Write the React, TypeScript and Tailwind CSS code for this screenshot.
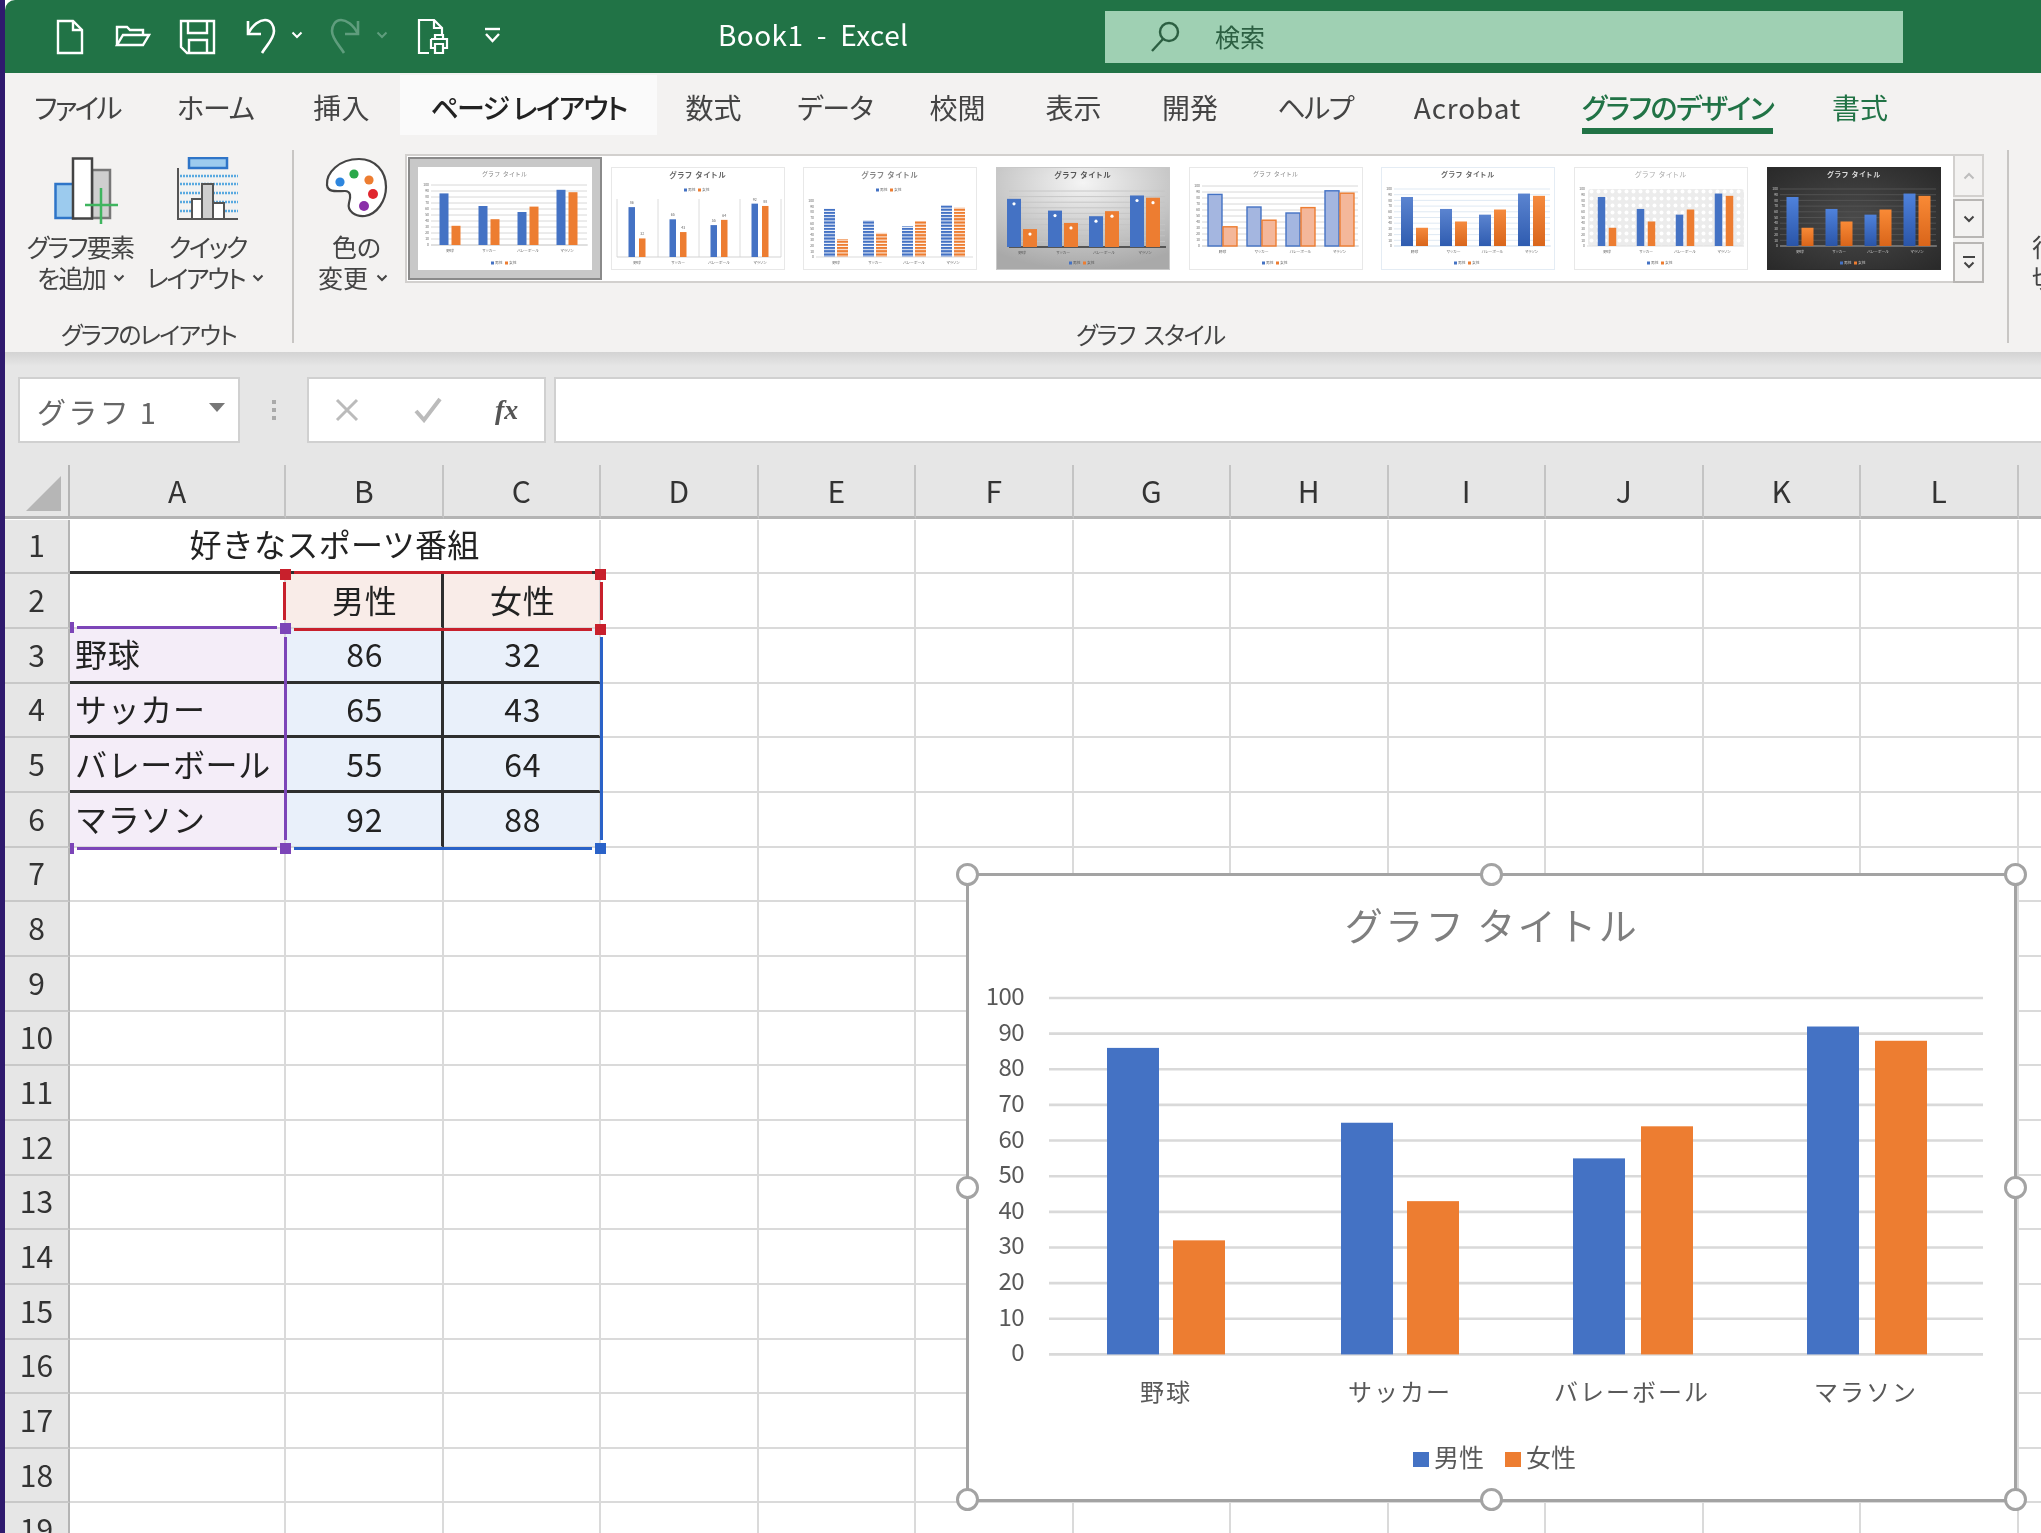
import { Fragment } from "react";

const tabs = [
  { label: "ファイル", w: "w-[142px]", t: "tracking-[-0.1em]" },
  { label: "ホーム", w: "w-[135px]", t: "tracking-[-0.04em]" },
  { label: "挿入", w: "w-[117px]", t: "tracking-[0.01em]" },
  { label: "ページ レイアウト", w: "w-[257px]", t: "tracking-[-0.06em]", active: true },
  { label: "数式", w: "w-[113px]", t: "" },
  { label: "データ", w: "w-[130px]", t: "tracking-[-0.03em]" },
  { label: "校閲", w: "w-[115px]", t: "" },
  { label: "表示", w: "w-[117px]", t: "" },
  { label: "開発", w: "w-[116px]", t: "" },
  { label: "ヘルプ", w: "w-[134px]", t: "tracking-[-0.06em]" },
  { label: "Acrobat", w: "w-[171px]", t: "tracking-[0.03em]" },
  { label: "グラフのデザイン", w: "w-[249px]", t: "tracking-[-0.05em]", green: true, line: true },
  { label: "書式", w: "w-[116px]", t: "", green: true },
];

const men = [86, 65, 55, 92];
const women = [32, 43, 64, 88];
const cats = ["野球", "サッカー", "バレーボール", "マラソン"];

const columns = ["A", "B", "C", "D", "E", "F", "G", "H", "I", "J", "K", "L", "M"];
const rows = Array.from({ length: 19 }, (_, i) => i + 1);

const sheet: Record<string, string> = {
  B2: "男性",
  C2: "女性",
  A3: "野球",
  B3: "86",
  C3: "32",
  A4: "サッカー",
  B4: "65",
  C4: "43",
  A5: "バレーボール",
  B5: "55",
  C5: "64",
  A6: "マラソン",
  B6: "92",
  C6: "88",
};

// selection lines and handles that sit over the cells
const marks = [
  "left-[289px] top-[106px] w-[298px] h-[3px] bg-[#c8202c]",
  "left-[289px] top-[163px] w-[298px] h-[3px] bg-[#c8202c]",
  "left-[278px] top-[117px] w-[3px] h-[38px] bg-[#c8202c]",
  "left-[595px] top-[117px] w-[3px] h-[38px] bg-[#c8202c]",
  "left-[275px] top-[104px] w-[11px] h-[11px] bg-[#c8202c]",
  "left-[590px] top-[104px] w-[11px] h-[11px] bg-[#c8202c]",
  "left-[590px] top-[159px] w-[11px] h-[11px] bg-[#c8202c]",
  "left-[72px] top-[161px] w-[200px] h-[3px] bg-[#7c45b8]",
  "left-[72px] top-[382px] w-[200px] h-[3px] bg-[#7c45b8]",
  "left-[279px] top-[172px] w-[3px] h-[203px] bg-[#7c45b8]",
  "left-[65px] top-[157px] w-[4px] h-[11px] bg-[#7c45b8]",
  "left-[65px] top-[378px] w-[4px] h-[11px] bg-[#7c45b8]",
  "left-[275px] top-[158px] w-[11px] h-[11px] bg-[#7c45b8]",
  "left-[275px] top-[378px] w-[11px] h-[11px] bg-[#7c45b8]",
  "left-[289px] top-[382px] w-[298px] h-[3px] bg-[#2a62c8]",
  "left-[595px] top-[172px] w-[3px] h-[203px] bg-[#2a62c8]",
  "left-[590px] top-[378px] w-[11px] h-[11px] bg-[#2a62c8]",
];

const chartHandles = [
  "left-[-10px] top-[-10px]",
  "left-[514px] top-[-10px]",
  "left-[1038px] top-[-10px]",
  "left-[-10px] top-[303px]",
  "left-[1038px] top-[303px]",
  "left-[-10px] top-[615px]",
  "left-[514px] top-[615px]",
  "left-[1038px] top-[615px]",
];

function cellClass(col: string, row: number) {
  const inner = row >= 3 && row <= 5;
  const bottom = inner ? "border-b-[3px] border-b-[#2e2e2e]" : "border-b-2 border-b-[#dadada]";
  const right = col === "B" && row >= 2 && row <= 6 ? "border-r-[3px] border-r-[#2e2e2e]" : "border-r-2 border-r-[#dadada]";
  let bg = "bg-white";
  if ((col === "B" || col === "C") && row === 2) bg = "bg-[#f9ece8]";
  if ((col === "B" || col === "C") && row >= 3 && row <= 6) bg = "bg-[#e9f0fa]";
  if (col === "A" && row >= 3 && row <= 6) bg = "bg-[#f4edf8]";
  if (col === "A") return `${bottom} border-r-2 border-r-[#dadada] ${bg} justify-start pl-[5px]`;
  if (col === "B" || col === "C") return `${bottom} ${right} ${bg} justify-center pl-[3px]`;
  return `border-b-2 border-b-[#dadada] border-r-2 border-r-[#dadada] ${bg}`;
}

function Chevron({ className = "" }: { className?: string }) {
  return (
    <svg width="12" height="8" viewBox="0 0 12 8" className={`shrink-0 ${className}`}>
      <path d="M1.5 1.5 6 6l4.5-4.5" fill="none" stroke="currentColor" strokeWidth="2" />
    </svg>
  );
}

function QuickAccess() {
  return (
    <div className="flex items-center h-full pl-[51px] text-white">
      <svg width="28" height="36" viewBox="0 0 28 36" fill="none" stroke="currentColor" strokeWidth="2.4">
        <path d="M2 2h15l9 9v23H2z" />
        <path d="M17 2v9h9" />
      </svg>
      <svg width="36" height="24" viewBox="0 0 36 24" fill="none" stroke="currentColor" strokeWidth="2.4" className="ml-[31px] mt-[-2px]">
        <path d="M2 21V3h10l3 3h13v5" />
        <path d="M2 21l6-10h26l-6 10z" />
      </svg>
      <svg width="37" height="36" viewBox="0 0 37 36" fill="none" stroke="currentColor" strokeWidth="2.4" className="ml-[28px]">
        <path d="M2 2h33v32H8l-6-6z" />
        <path d="M9 2v12h19V2" />
        <path d="M10 34V21h18v13" />
      </svg>
      <svg width="31" height="37" viewBox="0 0 31 37" fill="none" stroke="currentColor" strokeWidth="2.6" className="ml-[29px]">
        <path d="M3 3v13h13" />
        <path d="M3 16C8 6 15 2 20 2c6 0 9 6 9 11 0 8-8 15-12 22" />
      </svg>
      <Chevron className="ml-[15px] mt-[-4px]" />
      <svg width="31" height="37" viewBox="0 0 31 37" fill="none" stroke="#5f9d7d" strokeWidth="2.6" className="ml-[27px]">
        <path d="M28 3v13H15" />
        <path d="M28 16C23 6 16 2 11 2 5 2 2 8 2 13c0 8 8 15 12 22" />
      </svg>
      <Chevron className="ml-[15px] mt-[-4px] text-[#5f9d7d]" />
      <svg width="32" height="36" viewBox="0 0 32 36" fill="none" stroke="currentColor" strokeWidth="2.2" className="ml-[29px]">
        <path d="M12 34H2V1h15l8 8v8" />
        <path d="M17 1v8h8" />
        <path d="M14 20h16v9h-4" />
        <path d="M18 20v-4h8v4" />
        <path d="M18 25h8v9h-8z" />
        <path d="M18 29h-4v-9" />
      </svg>
      <svg width="17" height="16" viewBox="0 0 17 16" fill="none" stroke="currentColor" strokeWidth="2.4" className="ml-[35px] mt-[-4px]">
        <path d="M1 2h15" />
        <path d="M2 7l6.5 7L15 7" />
      </svg>
    </div>
  );
}

function ChartElementIcon() {
  return (
    <svg width="66" height="68" viewBox="0 0 66 68">
      <rect x="1.5" y="27" width="20" height="34" fill="#9ccbee" stroke="#2e75c8" strokeWidth="2.5" />
      <rect x="38" y="13" width="18" height="48" fill="#cfcfcf" stroke="#777" strokeWidth="2.5" />
      <rect x="19" y="1.5" width="19" height="60" fill="#fff" stroke="#444" strokeWidth="2.5" />
      <path d="M31 48h33M47 31v36" stroke="#3fb55f" strokeWidth="2.5" fill="none" />
    </svg>
  );
}

function QuickLayoutIcon() {
  return (
    <svg width="62" height="66" viewBox="0 0 62 66">
      <rect x="12" y="1" width="38" height="10" fill="#9ccbee" stroke="#2e75c8" strokeWidth="2.5" />
      {[19, 27, 36, 45, 54].map((y) => (
        <path key={y} d={`M3 ${y}h58`} stroke="#58a9e0" strokeWidth="2.4" strokeDasharray="2 1" />
      ))}
      <path d="M1 11v51h60" fill="none" stroke="#555" strokeWidth="2" />
      <rect x="15" y="42" width="10" height="20" fill="#fff" stroke="#555" strokeWidth="2" />
      <rect x="25" y="27" width="11" height="35" fill="#cfcfcf" stroke="#555" strokeWidth="2" />
      <rect x="36" y="46" width="11" height="16" fill="#fff" stroke="#555" strokeWidth="2" />
    </svg>
  );
}

function PaletteIcon() {
  return (
    <svg width="63" height="62" viewBox="0 0 63 62">
      <path
        d="M34 2C14 2 1 16 2 28c1 8 10 6 18 6 6 0 6 6 4 12-2 8 6 14 16 13 12-2 21-15 21-29C61 14 50 2 34 2z"
        fill="#fff"
        stroke="#444"
        strokeWidth="2.2"
      />
      <circle cx="15" cy="25" r="4.6" fill="#2e86de" />
      <circle cx="29" cy="17" r="4.6" fill="#2aa84a" />
      <circle cx="44" cy="23" r="4.6" fill="#ed7d31" />
      <circle cx="48" cy="37" r="5" fill="#e0262e" />
      <circle cx="39" cy="49" r="5" fill="#8a2fa8" />
    </svg>
  );
}

type ThumbCfg = {
  bg: string;
  titleFill: string;
  titleSize: number;
  titleWeight: number;
  titleY: number;
  legendY: number;
  cx: number;
  step: number;
  barW: number;
  gap: number;
  top: number;
  base: number;
  grid: string;
  axis: string;
  text: string;
  blue: string;
  orange: string;
  edgeB?: string;
  edgeO?: string;
  yLabels?: boolean;
  vLines?: boolean;
  dots?: boolean;
  values?: boolean;
  hatch?: boolean;
  frame: string;
};

const thumbs: ThumbCfg[] = [
  { bg: "#fff", titleFill: "#888", titleSize: 6, titleWeight: 400, titleY: 9, legendY: 97, cx: 32, step: 39, barW: 9, gap: 3, top: 18, base: 78, grid: "#d4d4d4", axis: "#d4d4d4", text: "#666", blue: "#4472c4", orange: "#ed7d31", yLabels: true, frame: "#fff" },
  { bg: "#fff", titleFill: "#666", titleSize: 7.5, titleWeight: 700, titleY: 11, legendY: 24, cx: 26, step: 41, barW: 6.5, gap: 4, top: 32, base: 90, grid: "none", axis: "#d4d4d4", text: "#666", blue: "#4472c4", orange: "#ed7d31", vLines: true, values: true, frame: "#e8e8e8" },
  { bg: "#fff", titleFill: "#888", titleSize: 7.5, titleWeight: 700, titleY: 11, legendY: 24, cx: 33, step: 39, barW: 11, gap: 2, top: 34, base: 90, grid: "none", axis: "#dcdcdc", text: "#666", blue: "url(#stripe-b)", orange: "url(#stripe-o)", yLabels: true, frame: "#e8e8e8" },
  { bg: "url(#metal)", titleFill: "#555", titleSize: 7.5, titleWeight: 700, titleY: 11, legendY: 97, cx: 26, step: 41, barW: 14, gap: 2, top: 24, base: 80, grid: "#c4c4c4", axis: "#555", text: "#555", blue: "#4472c4", orange: "#ed7d31", dots: true, frame: "#c8c8c8" },
  { bg: "#fff", titleFill: "#888", titleSize: 6, titleWeight: 400, titleY: 9, legendY: 97, cx: 33.5, step: 39, barW: 14, gap: 1, top: 19, base: 79, grid: "#d4d4d4", axis: "#d4d4d4", text: "#666", blue: "#a4b6e0", orange: "#f4b79a", edgeB: "#4472c4", edgeO: "#ed7d31", yLabels: true, frame: "#e8e8e8" },
  { bg: "#fff", titleFill: "#666", titleSize: 7, titleWeight: 700, titleY: 10, legendY: 97, cx: 33.5, step: 39, barW: 12, gap: 3, top: 22, base: 79, grid: "#dbe6f2", axis: "#dbe6f2", text: "#666", blue: "url(#grad-b)", orange: "url(#grad-o)", yLabels: true, frame: "#e4ecf4" },
  { bg: "#fff", titleFill: "#aaa", titleSize: 7, titleWeight: 400, titleY: 10, legendY: 97, cx: 33, step: 39, barW: 7.5, gap: 3.5, top: 22, base: 79, grid: "none", axis: "#ddd", text: "#666", blue: "#4472c4", orange: "#ed7d31", yLabels: true, hatch: true, frame: "#e8e8e8" },
  { bg: "url(#dark)", titleFill: "#ddd", titleSize: 7, titleWeight: 700, titleY: 10, legendY: 97, cx: 33, step: 39, barW: 12, gap: 3, top: 22, base: 79, grid: "#555", axis: "#999", text: "#ccc", blue: "url(#grad-b2)", orange: "url(#grad-o2)", yLabels: true, frame: "#2c2c2c" },
];

function Thumb({ cfg, selected }: { cfg: ThumbCfg; selected?: boolean }) {
  const h = (v: number) => ((cfg.base - cfg.top) * v) / 100;
  const ticks = [100, 90, 80, 70, 60, 50, 40, 30, 20, 10, 0];
  return (
    <svg
      width="174"
      height="103"
      viewBox="0 0 174 103"
      className={selected ? "shrink-0 shadow-[0_0_0_8px_#c8c8c8,0_0_0_10px_#8a8a8a]" : "shrink-0"}
    >
      <defs>
        <pattern id="stripe-b" width="4" height="3.2" patternUnits="userSpaceOnUse">
          <rect width="4" height="2.2" fill="#4472c4" />
        </pattern>
        <pattern id="stripe-o" width="4" height="3.2" patternUnits="userSpaceOnUse">
          <rect width="4" height="2.2" fill="#ed7d31" />
        </pattern>
        <pattern id="hatch" width="7" height="7" patternUnits="userSpaceOnUse">
          <rect width="7" height="7" fill="#ececec" />
          <circle cx="3.5" cy="3.5" r="2" fill="#fff" />
        </pattern>
        <radialGradient id="metal" cx="50%" cy="15%" r="85%">
          <stop offset="0" stopColor="#f4f4f4" />
          <stop offset="1" stopColor="#a9a9a9" />
        </radialGradient>
        <radialGradient id="dark" cx="50%" cy="50%" r="75%">
          <stop offset="0" stopColor="#4a4a4a" />
          <stop offset="1" stopColor="#272727" />
        </radialGradient>
        <linearGradient id="grad-b" x1="0" y1="0" x2="0" y2="1">
          <stop offset="0" stopColor="#5b84d0" />
          <stop offset="1" stopColor="#2f5cb0" />
        </linearGradient>
        <linearGradient id="grad-o" x1="0" y1="0" x2="0" y2="1">
          <stop offset="0" stopColor="#f58a3e" />
          <stop offset="1" stopColor="#d9661c" />
        </linearGradient>
        <linearGradient id="grad-b2" x1="0" y1="0" x2="0" y2="1">
          <stop offset="0" stopColor="#4f82dc" />
          <stop offset="1" stopColor="#2a55a8" />
        </linearGradient>
        <linearGradient id="grad-o2" x1="0" y1="0" x2="0" y2="1">
          <stop offset="0" stopColor="#f98a36" />
          <stop offset="1" stopColor="#d9651a" />
        </linearGradient>
      </defs>
      <rect x="0.5" y="0.5" width="173" height="102" fill={cfg.bg} stroke={cfg.frame} />
      <text x="87" y={cfg.titleY} textAnchor="middle" fontSize={cfg.titleSize} fontWeight={cfg.titleWeight} fill={cfg.titleFill} letterSpacing="1">
        グラフ タイトル
      </text>
      {cfg.hatch && <rect x="14" y={cfg.top} width="156" height={cfg.base - cfg.top} rx="3" fill="url(#hatch)" />}
      {cfg.grid !== "none" &&
        ticks.map((t) => (
          <path key={t} d={`M13 ${cfg.base - h(t)}H169`} stroke={cfg.grid} strokeWidth="0.9" />
        ))}
      {cfg.vLines &&
        [6, 47, 88, 129, 170].map((x) => <path key={x} d={`M${x} ${cfg.top}V${cfg.base}`} stroke="#dcdcdc" strokeWidth="1" />)}
      <path d={`M${cfg.vLines ? 6 : 13} ${cfg.base}H170`} stroke={cfg.axis} strokeWidth={cfg.dots ? 2 : 1.2} />
      {cfg.yLabels &&
        ticks.map((t) => (
          <text key={t} x="11" y={cfg.base - h(t) + 1.2} textAnchor="end" fontSize="3.4" fill={cfg.text}>
            {t}
          </text>
        ))}
      {cats.map((c, i) => {
        const center = cfg.cx + cfg.step * i;
        const bx = center - cfg.gap / 2 - cfg.barW;
        const ox = center + cfg.gap / 2;
        return (
          <Fragment key={c}>
            <rect x={bx} y={cfg.base - h(men[i])} width={cfg.barW} height={h(men[i])} fill={cfg.blue} stroke={cfg.edgeB} strokeWidth={cfg.edgeB ? 1.4 : 0} />
            <rect x={ox} y={cfg.base - h(women[i])} width={cfg.barW} height={h(women[i])} fill={cfg.orange} stroke={cfg.edgeO} strokeWidth={cfg.edgeO ? 1.4 : 0} />
            {cfg.dots && (
              <>
                <circle cx={bx + cfg.barW / 2} cy={cfg.base - h(men[i]) + 5} r="1.6" fill="#fff" />
                <circle cx={ox + cfg.barW / 2} cy={cfg.base - h(women[i]) + 5} r="1.6" fill="#fff" />
              </>
            )}
            {cfg.values && (
              <>
                <text x={bx + cfg.barW / 2} y={cfg.base - h(men[i]) - 3} textAnchor="middle" fontSize="3.6" fill="#666">{men[i]}</text>
                <text x={ox + cfg.barW / 2} y={cfg.base - h(women[i]) - 3} textAnchor="middle" fontSize="3.6" fill="#666">{women[i]}</text>
              </>
            )}
            <text x={center} y={cfg.base + 7} textAnchor="middle" fontSize="3.8" fill={cfg.text}>
              {c}
            </text>
          </Fragment>
        );
      })}
      <rect x="73" y={cfg.legendY - 2.5} width="3" height="3" fill="#4472c4" />
      <text x="77" y={cfg.legendY} fontSize="3.8" fill={cfg.text}>男性</text>
      <rect x="87" y={cfg.legendY - 2.5} width="3" height="3" fill="#ed7d31" />
      <text x="91" y={cfg.legendY} fontSize="3.8" fill={cfg.text}>女性</text>
    </svg>
  );
}

function ChartObject() {
  const base = 481.4;
  const unit = 3.564;
  const blueX = [140, 374, 606, 840];
  const orangeX = [206, 440, 674, 908];
  const catX = [199, 433, 665, 899];
  return (
    <div className="absolute left-[961px] top-[408px] w-[1051px] h-[629px] bg-white border-[3px] border-[#a3a3a3]">
      <svg width="1049" height="628" viewBox="0 0 1049 628" className="absolute left-[-2px] top-[-3px]">
        <text x="525" y="67" textAnchor="middle" fontSize="38" fill="#7f7f7f" letterSpacing="2.5">
          グラフ タイトル
        </text>
        {[100, 90, 80, 70, 60, 50, 40, 30, 20, 10, 0].map((t) => (
          <Fragment key={t}>
            <path d={`M82 ${base - t * unit}H1016`} stroke="#d9d9d9" strokeWidth="2.6" />
            <text x="57" y={base - t * unit + 7} textAnchor="end" fontSize="24" fill="#595959" letterSpacing="-0.6">
              {t}
            </text>
          </Fragment>
        ))}
        {cats.map((c, i) => (
          <Fragment key={c}>
            <rect x={blueX[i]} y={base - men[i] * unit} width="52" height={men[i] * unit} fill="#4472c4" />
            <rect x={orangeX[i]} y={base - women[i] * unit} width="52" height={women[i] * unit} fill="#ed7d31" />
            <text x={catX[i]} y="528" textAnchor="middle" fontSize="24" fill="#595959" letterSpacing="2">
              {c}
            </text>
          </Fragment>
        ))}
        <rect x="446" y="579" width="16" height="15" fill="#4472c4" />
        <text x="467" y="594" fontSize="25" fill="#595959">男性</text>
        <rect x="538" y="579" width="16" height="15" fill="#ed7d31" />
        <text x="559" y="594" fontSize="25" fill="#595959">女性</text>
      </svg>
      {chartHandles.map((pos) => (
        <div key={pos} className={`absolute ${pos} w-[23px] h-[23px] ml-[-3px] mt-[-3px] rounded-full bg-white border-[3px] border-[#a3a3a3]`} />
      ))}
    </div>
  );
}

export default function App() {
  return (
    <div className="flex h-[1533px] w-[2041px] overflow-hidden bg-[#2f1a6e] text-[#444] font-['Noto_Sans_CJK_JP','Noto_Sans',sans-serif] blur-[0.6px]">
      <div className="w-[5px] shrink-0" />
      <div className="flex-1 flex flex-col min-w-0 bg-white">
        {/* title bar */}
        <div className="relative h-[73px] bg-[#217346] rounded-tl-[10px] text-white shrink-0 flex">
          <div className="w-[700px] shrink-0">
            <QuickAccess />
          </div>
          <div className="w-[400px] shrink-0 pt-[15px] pl-[13px] text-[28px] leading-[38px] whitespace-nowrap tracking-[0.015em]">Book1&nbsp;&nbsp;-&nbsp;&nbsp;Excel</div>
          <div className="mt-[11px] h-[52px] w-[798px] shrink-0 bg-[#9fd0b3] flex items-center pl-[45px] text-[#2c5f42]">
            <svg width="30" height="32" viewBox="0 0 30 32" fill="none" stroke="#2c5f42" strokeWidth="2.4">
              <circle cx="19" cy="11" r="9" />
              <path d="M13 18 2 30" />
            </svg>
            <span className="ml-[35px] text-[25px]">検索</span>
          </div>
        </div>

        {/* tabs */}
        <div className="h-[62px] bg-[#f3f2f1] flex pt-[2px] pl-[1px] shrink-0 text-[28px] [font-feature-settings:'palt']">
          {tabs.map((t) => (
            <div
              key={t.label}
              className={`${t.w} ${t.t} shrink-0 h-[60px] flex items-center justify-center pt-[4px] whitespace-nowrap ${t.active ? "bg-[#fafafa] text-[#222] font-medium" : ""} ${t.green ? "text-[#217346]" : ""}`}
            >
              <span className={t.line ? "relative font-medium" : ""}>
                {t.label}
                {t.line && <span className="absolute left-0 right-0 top-[42px] h-[6px] bg-[#217346]" />}
              </span>
            </div>
          ))}
        </div>

        {/* ribbon */}
        <div className="h-[217px] bg-[#f3f2f1] flex shrink-0 [font-feature-settings:'palt'] text-[25px] leading-[31px]">
          <div className="w-[287px] shrink-0 flex flex-col">
            <div className="h-[183px] flex pt-[22px]">
              <div className="w-[150px] shrink-0 flex flex-col items-center">
                <div className="h-[74px] ml-[14px]"><ChartElementIcon /></div>
                <div className="tracking-[-0.07em] whitespace-nowrap">グラフ要素</div>
                <div className="flex items-center gap-[8px] tracking-[-0.07em] ml-[2px]">を追加<Chevron /></div>
              </div>
              <div className="w-[125px] shrink-0 flex flex-col items-center">
                <div className="h-[74px] ml-[-20px]"><QuickLayoutIcon /></div>
                <div className="tracking-[-0.09em] ml-[-20px]">クイック</div>
                <div className="flex items-center gap-[8px] tracking-[-0.09em] whitespace-nowrap ml-[-24px]">レイアウト<Chevron /></div>
              </div>
            </div>
            <div className="text-center text-[24px] tracking-[-0.07em]">グラフのレイアウト</div>
          </div>
          <div className="w-[2px] h-[193px] mt-[15px] bg-[#c8c6c4] shrink-0" />
          <div className="w-[1713px] flex flex-col shrink-0">
            <div className="h-[183px] flex">
              <div className="w-[111px] shrink-0 flex flex-col items-center pt-[22px]">
                <div className="h-[74px] ml-[14px]"><PaletteIcon /></div>
                <div className="ml-[14px]">色の</div>
                <div className="flex items-center gap-[8px] ml-[7px]">変更<Chevron /></div>
              </div>
              <div className="mt-[19px] h-[129px] w-[1548px] shrink-0 bg-white border-2 border-[#d2d0ce] border-r-0 flex gap-[18.7px] pl-[11px] pt-[11px]">
                {thumbs.map((cfg, i) => (
                  <Thumb key={i} cfg={cfg} selected={i === 0} />
                ))}
              </div>
              <div className="mt-[19px] w-[31px] shrink-0 h-[129px] flex flex-col">
                <div className="h-[43px] border-2 border-[#d2d0ce] flex items-center justify-center text-[#bdbdbd]"><Chevron className="rotate-180" /></div>
                <div className="mt-[2px] h-[39px] border-2 border-[#b8b6b4] flex items-center justify-center text-[#444]"><Chevron /></div>
                <div className="mt-[4px] h-[41px] border-2 border-[#b8b6b4] flex flex-col items-center justify-center text-[#444]">
                  <div className="w-[12px] h-[2px] bg-[#444] mb-[3px]" />
                  <Chevron />
                </div>
              </div>
            </div>
            <div className="text-center text-[24px] tracking-[-0.05em]">グラフ&nbsp;&nbsp;スタイル</div>
          </div>
          <div className="w-[2px] h-[193px] mt-[15px] bg-[#c8c6c4] shrink-0" />
          <div className="pl-[23px] pt-[96px] whitespace-nowrap">
            <div>行/列の</div>
            <div>切り替え</div>
          </div>
        </div>

        {/* formula bar */}
        <div className="h-[113px] shrink-0 flex items-start pt-[25px] pl-[13px] bg-[linear-gradient(#d3d3d3,#e6e6e6_14px)]">
          <div className="w-[222px] h-[66px] shrink-0 bg-white border-2 border-[#d0d0d0] flex items-center pl-[17px] pt-[3px] text-[29px] text-[#666] tracking-[0.08em] whitespace-nowrap">
            グラフ 1
            <div className="ml-auto mr-[13px] mt-[-8px] w-0 h-0 border-l-[8px] border-r-[8px] border-t-[9px] border-l-transparent border-r-transparent border-t-[#777]" />
          </div>
          <div className="w-[67px] h-[66px] shrink-0 flex flex-col items-center justify-center gap-[4px]">
            <div className="w-[4px] h-[4px] bg-[#aaa]" />
            <div className="w-[4px] h-[4px] bg-[#aaa]" />
            <div className="w-[4px] h-[4px] bg-[#aaa]" />
          </div>
          <div className="w-[239px] h-[66px] shrink-0 bg-white border-2 border-[#d0d0d0] flex items-center pl-[26px]">
            <svg width="24" height="24" viewBox="0 0 24 24" stroke="#bbb" strokeWidth="3" fill="none">
              <path d="M2 2l20 20M22 2 2 22" />
            </svg>
            <svg width="28" height="26" viewBox="0 0 28 26" stroke="#bbb" strokeWidth="4" fill="none" className="ml-[55px]">
              <path d="M2 14l8 9L26 2" />
            </svg>
            <span className="ml-[53px] font-['Liberation_Serif',serif] italic font-bold text-[28px] text-[#555]">fx</span>
          </div>
          <div className="ml-[8px] flex-1 h-[66px] bg-white border-2 border-r-0 border-[#d0d0d0]" />
        </div>

        {/* sheet */}
        <div className="relative flex-1 min-h-0 grid grid-cols-[65px_216px_repeat(12,157.5px)] auto-rows-[54.67px] content-start bg-white">
          <div className="h-[54px] bg-[#e6e6e6] border-r-2 border-r-[#b4b4b4] border-b-[3px] border-b-[#b4b4b4] flex items-center justify-end pr-[7px]">
            <div className="w-0 h-0 border-t-[35px] border-t-transparent border-r-[35px] border-r-[#b6b6b6] mt-[6px]" />
          </div>
          {columns.map((c) => (
            <div key={c} className="h-[54px] bg-[#e6e6e6] border-r-2 border-r-[#c4c4c4] border-b-[3px] border-b-[#b4b4b4] flex items-center justify-center text-[30px] text-[#333]">
              {c === "M" ? "" : c}
            </div>
          ))}
          {rows.map((r) => (
            <Fragment key={r}>
              <div className="bg-[#e6e6e6] border-r-2 border-r-[#b4b4b4] border-b-2 border-b-[#c8c8c8] flex items-center justify-center pb-[3px] text-[30px] leading-none text-[#333]">
                {r}
              </div>
              {r === 1 ? (
                <>
                  <div className="col-span-3 bg-white border-b-[3px] border-b-[#2e2e2e] border-r-2 border-r-[#dadada] flex items-center justify-center pb-[5px] text-[32px] leading-none text-[#222] tracking-[0.01em]">
                    好きなスポーツ番組
                  </div>
                  {columns.slice(3).map((c) => (
                    <div key={c} className={`flex items-center ${cellClass(c, r)}`} />
                  ))}
                </>
              ) : (
                columns.map((c) => (
                  <div key={c} className={`flex items-center pb-[3px] text-[32px] leading-none text-[#222] whitespace-nowrap tracking-[0.02em] ${cellClass(c, r)}`}>
                    {sheet[`${c}${r}`]}
                  </div>
                ))
              )}
            </Fragment>
          ))}
          {marks.map((m) => (
            <div key={m} className={`absolute ${m}`} />
          ))}
          <ChartObject />
        </div>
      </div>
    </div>
  );
}
